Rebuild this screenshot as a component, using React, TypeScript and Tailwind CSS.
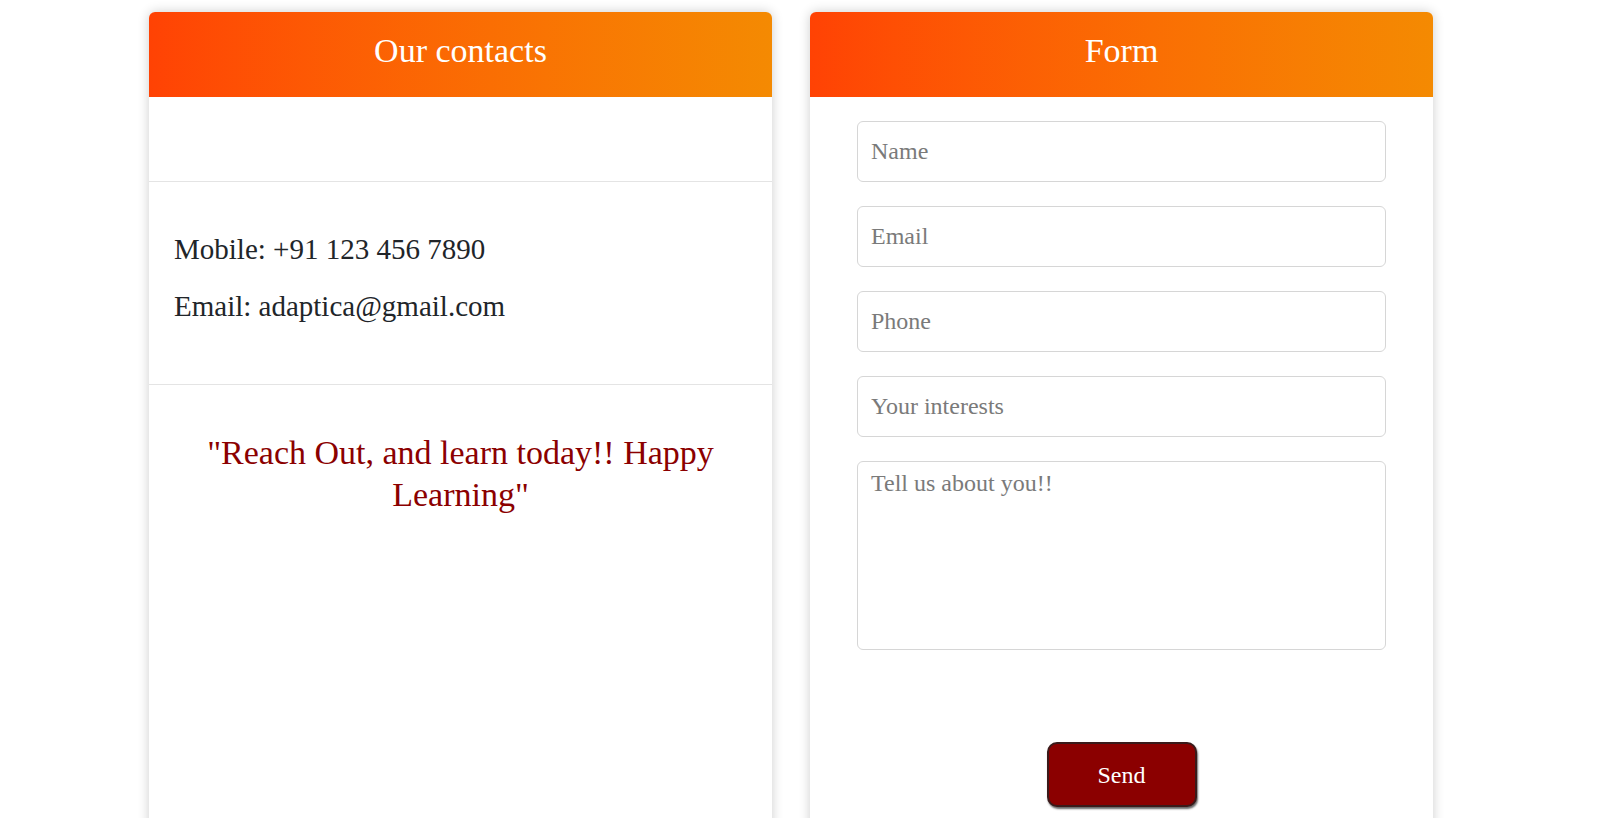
import React from "react";

const serif = { fontFamily: '"Liberation Serif", "Times New Roman", serif' };

function Header({ title }: { title: string }) {
  return (
    <div className="h-[85px] flex items-center justify-center rounded-t-[6px] bg-gradient-to-r from-[#ff4204] to-[#f48a02]">
      <h2 className="text-[34px] leading-none text-white pb-[8px]">{title}</h2>
    </div>
  );
}

const inputCls =
  "w-full h-[61px] rounded-[6px] border border-[#d6d6d6] px-[13px] text-[24px] text-[#333] placeholder:text-[#7a7a7a] outline-none bg-white";

export default function App() {
  return (
    <div className="h-[818px] w-[1600px] overflow-hidden bg-white" style={serif}>
      <div className="flex gap-[38px] pl-[149px] pt-[12px]">
        <div className="w-[623px] h-[900px] bg-white rounded-t-[6px] shadow-[0_0_12px_rgba(0,0,0,0.2)]">
          <Header title="Our contacts" />
          <div className="h-[85px] border-b border-[#e4e4e4]" />
          <div className="h-[203px] border-b border-[#e4e4e4] pl-[25px] pt-[50px] text-[29px] leading-[35px] text-[#212529]">
            <p>Mobile: +91 123 456 7890</p>
            <p className="mt-[22px]">Email: adaptica@gmail.com</p>
          </div>
          <div className="px-[25px] pt-[47px] text-center text-[34px] leading-[42px] text-[#8b0000]">
            "Reach Out, and learn today!! Happy Learning"
          </div>
        </div>
        <div className="w-[623px] h-[900px] bg-white rounded-t-[6px] shadow-[0_0_12px_rgba(0,0,0,0.2)]">
          <Header title="Form" />
          <div className="flex flex-col px-[47px] pt-[24px]">
            <div className="flex flex-col gap-[24px]">
              <input className={inputCls} placeholder="Name" style={serif} />
              <input className={inputCls} placeholder="Email" style={serif} />
              <input className={inputCls} placeholder="Phone" style={serif} />
              <input className={inputCls} placeholder="Your interests" style={serif} />
              <textarea
                className="w-full h-[189px] resize-none rounded-[6px] border border-[#d6d6d6] px-[13px] pt-[4px] text-[24px] leading-[34px] text-[#333] placeholder:text-[#7a7a7a] outline-none bg-white"
                placeholder="Tell us about you!!"
                style={serif}
              />
            </div>
            <div className="flex justify-center mt-[92px]">
              <button
                className="w-[150px] h-[65px] rounded-[10px] border-2 border-[#3a1a1a] bg-[#8b0000] text-white text-[24px] shadow-[1px_2px_2px_rgba(0,0,0,0.6)]"
                style={serif}
              >
                Send
              </button>
            </div>
          </div>
        </div>
      </div>
    </div>
  );
}
